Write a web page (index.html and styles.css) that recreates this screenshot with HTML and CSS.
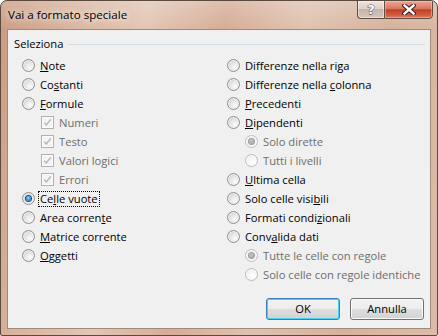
FILE: index.html
```html
<!DOCTYPE html>
<html lang="it">
<head>
<meta charset="utf-8">
<title>Vai a formato speciale</title>
<link rel="stylesheet" href="styles.css">
</head>
<body>
<div class="window">
  <div class="titlebar">
    <span class="title">Vai a formato speciale</span>
    <div class="caption-buttons">
      <div class="cbtn help"><span class="help-glyph">?</span></div>
      <div class="cbtn close">
        <svg width="14" height="11" viewBox="0 0 14 11">
          <path d="M2.5 1.5 L11.5 9.5 M11.5 1.5 L2.5 9.5" stroke="#3b1a14" stroke-width="4.4" stroke-linecap="square" fill="none"/>
          <path d="M2.5 1.5 L11.5 9.5 M11.5 1.5 L2.5 9.5" stroke="#ffffff" stroke-width="2.4" stroke-linecap="square" fill="none"/>
        </svg>
      </div>
    </div>
  </div>
  <div class="client">
    <div class="group-head"><span class="group-label">Seleziona</span><span class="group-line"></span></div>
    <div class="options">
      <div class="col">
        <div class="row"><span class="radio"></span><span class="lbl"><u>N</u>ote</span></div>
        <div class="row"><span class="radio"></span><span class="lbl">Co<u>s</u>tanti</span></div>
        <div class="row"><span class="radio"></span><span class="lbl"><u>F</u>ormule</span></div>
        <div class="row sub"><span class="check"><svg width="11" height="11" viewBox="0 0 11 11"><path d="M2.2 5.6 L4.3 7.9 L8.8 2.4" stroke="#b4b4b4" stroke-width="1.4" fill="none"/></svg></span><span class="lbl dis">Numeri</span></div>
        <div class="row sub"><span class="check"><svg width="11" height="11" viewBox="0 0 11 11"><path d="M2.2 5.6 L4.3 7.9 L8.8 2.4" stroke="#b4b4b4" stroke-width="1.4" fill="none"/></svg></span><span class="lbl dis">Testo</span></div>
        <div class="row sub"><span class="check"><svg width="11" height="11" viewBox="0 0 11 11"><path d="M2.2 5.6 L4.3 7.9 L8.8 2.4" stroke="#b4b4b4" stroke-width="1.4" fill="none"/></svg></span><span class="lbl dis">Valori logici</span></div>
        <div class="row sub"><span class="check"><svg width="11" height="11" viewBox="0 0 11 11"><path d="M2.2 5.6 L4.3 7.9 L8.8 2.4" stroke="#b4b4b4" stroke-width="1.4" fill="none"/></svg></span><span class="lbl dis">Errori</span></div>
        <div class="row"><span class="radio on"></span><span class="lbl focus">Ce<u>l</u>le vuote</span></div>
        <div class="row"><span class="radio"></span><span class="lbl">Area corren<u>t</u>e</span></div>
        <div class="row"><span class="radio"></span><span class="lbl"><u>M</u>atrice corrente</span></div>
        <div class="row"><span class="radio"></span><span class="lbl"><u>O</u>ggetti</span></div>
      </div>
      <div class="col">
        <div class="row"><span class="radio"></span><span class="lbl">Differenze nella ri<u>g</u>a</span></div>
        <div class="row"><span class="radio"></span><span class="lbl">Differenze nella <u>c</u>olonna</span></div>
        <div class="row"><span class="radio"></span><span class="lbl"><u>P</u>recedenti</span></div>
        <div class="row"><span class="radio"></span><span class="lbl"><u>D</u>ipendenti</span></div>
        <div class="row sub"><span class="radio dis on"></span><span class="lbl dis">Solo dirette</span></div>
        <div class="row sub"><span class="radio dis"></span><span class="lbl dis">Tutti i livelli</span></div>
        <div class="row"><span class="radio"></span><span class="lbl"><u>U</u>ltima cella</span></div>
        <div class="row"><span class="radio"></span><span class="lbl">Solo celle visi<u>b</u>ili</span></div>
        <div class="row"><span class="radio"></span><span class="lbl">Formati condi<u>z</u>ionali</span></div>
        <div class="row"><span class="radio"></span><span class="lbl">Conv<u>a</u>lida dati</span></div>
        <div class="row sub"><span class="radio dis on"></span><span class="lbl dis">Tutte le celle con regole</span></div>
        <div class="row sub"><span class="radio dis"></span><span class="lbl dis">Solo celle con regole identiche</span></div>
      </div>
    </div>
    <div class="actions">
      <div class="btn default">OK</div>
      <div class="btn">Annulla</div>
    </div>
  </div>
</div>
</body>
</html>
```
FILE: styles.css
```css
html, body {
  margin: 0;
  padding: 0;
  background: #ffffff;
}
body {
  font-family: "Open Sans", "Noto Sans", sans-serif;
  font-size: 11.2px;
  color: #000;
}
.window {
  width: 438px;
  height: 336px;
  box-sizing: border-box;
  border: 1px solid #5a4a40;
  border-radius: 7px 7px 2px 2px;
  display: flex;
  flex-direction: column;
  background:
    linear-gradient(to bottom, rgba(255,255,255,0.22), rgba(255,255,255,0) 28px),
    linear-gradient(100deg, #c99c82 0%, #d8b39d 14%, #e3c6b5 30%, #d5ad96 46%, #e0c2b0 62%, #d6b29d 80%, #dcbca9 100%);
  overflow: hidden;
}
.titlebar {
  height: 28px;
  flex: none;
  display: flex;
  align-items: flex-start;
  justify-content: space-between;
}
.title {
  margin-left: 7px;
  line-height: 28px;
  font-size: 11.6px;
  color: #000;
  text-shadow: 0 0 6px rgba(255,255,255,0.9), 0 0 10px rgba(255,255,255,0.7);
}
.caption-buttons {
  display: flex;
  margin-right: 4px;
  margin-top: -1px;
}
.cbtn {
  height: 19px;
  box-sizing: border-box;
  border: 1px solid #5e4d44;
  display: flex;
  align-items: center;
  justify-content: center;
}
.help {
  width: 27px;
  border-right: none;
  border-radius: 0 0 0 4px;
  background: linear-gradient(to bottom, #efe6e0 0%, #ddd0c7 45%, #c7b5a9 50%, #d4c5bb 100%);
  box-shadow: inset 0 0 0 1px rgba(255,255,255,0.45);
}
.help-glyph {
  font-family: "DejaVu Sans", sans-serif;
  font-weight: bold;
  font-size: 13px;
  line-height: 13px;
  color: #fff;
  -webkit-text-stroke: 0.8px #3a302b;
  paint-order: stroke fill;
}
.close {
  width: 49px;
  border-radius: 0 0 4px 0;
  background: linear-gradient(to bottom, #eaa797 0%, #d8775f 45%, #c23f26 52%, #cf5a3f 80%, #dc7a5c 100%);
  box-shadow: inset 0 0 0 1px rgba(255,210,200,0.45);
}
.close svg { display: block; }
.client {
  flex: 1;
  margin: 0 6px 6px 6px;
  border: 1px solid #a18a7b;
  background: #f0f0f0;
  display: flex;
  flex-direction: column;
}
.group-head {
  display: flex;
  align-items: center;
  padding: 7px 5px 0 6px;
  height: 14px;
  line-height: 14px;
}
.group-line {
  flex: 1;
  height: 1px;
  background: #d5dfe5;
  margin-left: 5px;
}
.options {
  display: grid;
  grid-template-columns: 205px 1fr;
  padding-left: 14px;
  margin-top: 5px;
}
.col {
  display: flex;
  flex-direction: column;
}
.row {
  height: 19px;
  display: flex;
  align-items: center;
}
.row.sub { padding-left: 18px; }
.lbl { white-space: nowrap; line-height: 14px; }
.lbl u { text-underline-offset: 1px; }
.lbl.dis { color: #6d6d6d; }
.lbl.focus {
  outline: 1px dotted #000;
  outline-offset: 0;
  padding: 0 1px;
  margin-left: -1px;
}
.radio {
  width: 13px;
  height: 13px;
  flex: none;
  box-sizing: border-box;
  border-radius: 50%;
  border: 1px solid #8e8f8f;
  margin-right: 5px;
  background: radial-gradient(circle at 65% 70%, #fbfbfb 0%, #e8e8e8 40%, #d2d2d2 80%, #c4c4c4 100%);
  box-shadow: inset 0 0 0 1px #f0f0f0;
  display: flex;
  align-items: center;
  justify-content: center;
}
.radio.on::after {
  content: "";
  width: 5px;
  height: 5px;
  border-radius: 50%;
  background: radial-gradient(circle at 45% 40%, #9fdcff 0%, #3a9ae0 45%, #0d4f8c 100%);
  box-shadow: 0 0 0 1px #1b4f7d;
}
.radio.dis {
  border-color: #bcbcbc;
  background: radial-gradient(circle at 62% 68%, #ffffff 0%, #f4f4f4 50%, #e6e6e6 100%);
  box-shadow: inset 0 0 0 1px #fafafa;
}
.radio.dis.on::after {
  background: radial-gradient(circle at 45% 40%, #cfcfcf 0%, #a6a6a6 60%, #8f8f8f 100%);
  box-shadow: 0 0 0 1px #9c9c9c;
}
.check {
  width: 13px;
  height: 13px;
  flex: none;
  box-sizing: border-box;
  border: 1px solid #b1b1b1;
  background: #f4f4f4;
  box-shadow: inset 0 0 0 1px #fcfcfc;
  margin-left: 1px;
  margin-right: 5px;
  display: flex;
  align-items: center;
  justify-content: center;
}
.check svg { display: block; }
.actions {
  display: flex;
  justify-content: flex-end;
  gap: 10px;
  padding-right: 6px;
  margin-top: 14px;
}
.btn {
  width: 74px;
  height: 22px;
  box-sizing: border-box;
  border: 1px solid #707070;
  border-radius: 3px;
  background: linear-gradient(to bottom, #f3f3f3 0%, #ececec 48%, #dedede 50%, #d2d2d2 100%);
  box-shadow: inset 0 0 0 1px #fbfbfb;
  display: flex;
  align-items: center;
  justify-content: center;
  line-height: 14px;
}
.btn.default {
  border-color: #3c7fb1;
  box-shadow: inset 0 0 0 1px #48d1f3;
}
```
